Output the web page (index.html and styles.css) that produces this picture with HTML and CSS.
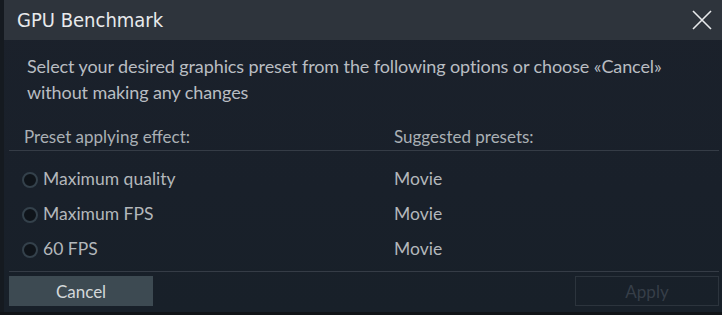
FILE: index.html
```html
<!DOCTYPE html>
<html>
<head>
<meta charset="utf-8">
<link rel="stylesheet" href="styles.css">
</head>
<body>
<div class="dialog">
  <div class="header">
    <span class="title">GPU Benchmark</span>
    <button class="close" aria-label="Close">
      <svg width="20" height="20" viewBox="0 0 20 20"><path d="M1 1 L19 19 M19 1 L1 19" stroke="#e8eaec" stroke-width="1.6" fill="none"/></svg>
    </button>
  </div>
  <div class="content">
    <p class="desc">Select your desired graphics preset from the following options or choose «Cancel» without making any changes</p>
    <div class="table">
      <div class="thead">
        <span class="col1">Preset applying effect:</span>
        <span class="col2">Suggested presets:</span>
      </div>
      <div class="rows">
        <label class="row"><span class="col1"><span class="radio"></span>Maximum quality</span><span class="col2">Movie</span></label>
        <label class="row"><span class="col1"><span class="radio"></span>Maximum FPS</span><span class="col2">Movie</span></label>
        <label class="row"><span class="col1"><span class="radio"></span>60 FPS</span><span class="col2">Movie</span></label>
      </div>
    </div>
    <div class="footer">
      <button class="btn cancel">Cancel</button>
      <button class="btn apply">Apply</button>
    </div>
  </div>
</div>
</body>
</html>
```
FILE: styles.css
```css
html, body {
  margin: 0;
  padding: 0;
}
body {
  width: 722px;
  height: 315px;
  background: #111418;
  font-family: Lato, "Open Sans", sans-serif;
  overflow: hidden;
}
.dialog {
  margin-left: 4px;
  width: 718px;
  height: 312px;
  background: linear-gradient(180deg, #1b212b 0%, #19202a 60%, #182029 100%);
  box-shadow: -4px 0 0 #151a20;
}
.header {
  height: 40px;
  background: #2e343c;
  display: flex;
  align-items: center;
  justify-content: space-between;
}
.title {
  padding-left: 13px;
  font-family: "DejaVu Sans Condensed", "DejaVu Sans", sans-serif;
  font-stretch: condensed;
  font-size: 20px;
  color: #e8eaec;
}
.close {
  background: none;
  border: 0;
  padding: 0;
  margin-right: 10px;
  width: 20px;
  height: 20px;
  display: flex;
}
.content {
  padding: 0 3px 0 5px;
}
.desc {
  margin: 13px 0 0 0;
  padding-left: 18px;
  max-width: 650px;
  font-size: 18px;
  letter-spacing: -0.1px;
  line-height: 26px;
  color: #b9bdc2;
}
.table {
  margin-top: 19px;
}
.thead {
  display: flex;
  height: 26px;
  line-height: 26px;
  font-size: 17px;
  color: #aab0b5;
  border-bottom: 1px solid #353c46;
}
.thead .col1 {
  padding-left: 15px;
  width: 355px;
}
.col1 {
  display: flex;
  align-items: center;
}
.col2 {
  padding-left: 15px;
}
.rows {
  padding: 10px 0 5px 0;
  border-bottom: 1px solid #353c46;
}
.row {
  display: flex;
  align-items: center;
  height: 35px;
  font-size: 17.5px;
  color: #b3b7bb;
}
.row .col1 {
  padding-left: 13px;
  width: 357px;
}
.radio {
  box-sizing: border-box;
  width: 16px;
  height: 16px;
  border-radius: 50%;
  border: 2px solid #34414b;
  background: #0f141a;
  margin-right: 5px;
  margin-top: 2px;
  flex: none;
}
.footer {
  display: flex;
  justify-content: space-between;
  margin-top: 4px;
}
.btn {
  width: 144px;
  height: 30px;
  font-family: Lato, "Open Sans", sans-serif;
  font-size: 17px;
  padding: 0;
}
.cancel {
  background: #3d4a52;
  border: 0;
  color: #d4d8da;
}
.apply {
  background: transparent;
  border: 1px solid #2c343d;
  color: #363e48;
}
```
